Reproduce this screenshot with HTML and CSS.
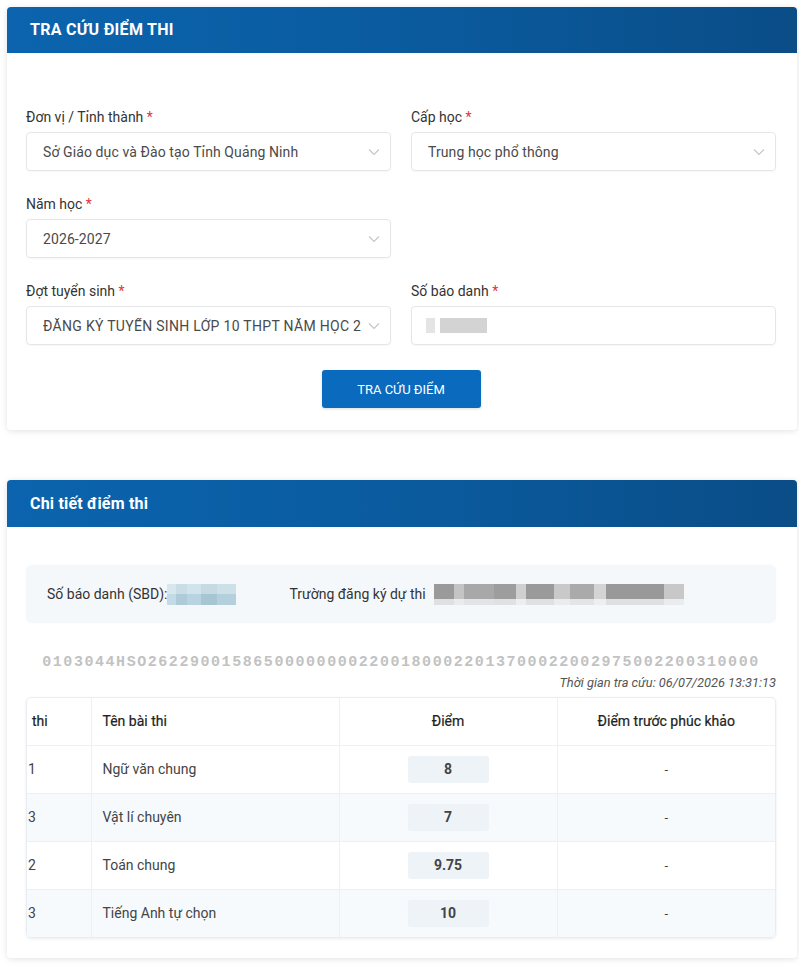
FILE: index.html
```html
<!DOCTYPE html>
<html>
<head>
	<title>Tra cứu điểm thi</title>
	<meta charset="utf-8">
	<link rel="stylesheet" href="styles.css">
</head>
<body>
<div class="page">
	<div class="card">
		<div class="card-head">TRA CỨU ĐIỂM THI</div>
		<div class="card-body search">
			<div class="form-grid">
				<div class="field">
					<label>Đơn vị / Tỉnh thành <i>*</i></label>
					<div class="select">
						<span>Sở Giáo dục và Đào tạo Tỉnh Quảng Ninh</span>
						<svg width="12" height="8" viewBox="0 0 12 8"><path d="M1 1.5l5 5 5-5" fill="none" stroke="#c6c6c6" stroke-width="1.2"/></svg>
					</div>
				</div>
				<div class="field">
					<label>Cấp học <i>*</i></label>
					<div class="select">
						<span>Trung học phổ thông</span>
						<svg width="12" height="8" viewBox="0 0 12 8"><path d="M1 1.5l5 5 5-5" fill="none" stroke="#c6c6c6" stroke-width="1.2"/></svg>
					</div>
				</div>
				<div class="field">
					<label>Năm học <i>*</i></label>
					<div class="select">
						<span>2026-2027</span>
						<svg width="12" height="8" viewBox="0 0 12 8"><path d="M1 1.5l5 5 5-5" fill="none" stroke="#c6c6c6" stroke-width="1.2"/></svg>
					</div>
				</div>
				<div class="field"></div>
				<div class="field">
					<label>Đợt tuyển sinh <i>*</i></label>
					<div class="select">
						<span class="long">ĐĂNG KÝ TUYỂN SINH LỚP 10 THPT NĂM HỌC 2</span>
						<svg width="12" height="8" viewBox="0 0 12 8"><path d="M1 1.5l5 5 5-5" fill="none" stroke="#c6c6c6" stroke-width="1.2"/></svg>
					</div>
				</div>
				<div class="field">
					<label>Số báo danh <i>*</i></label>
					<div class="input">
						<span class="blur blur-input"></span>
					</div>
				</div>
			</div>
			<div class="actions">
				<button class="btn">TRA CỨU ĐIỂM</button>
			</div>
		</div>
	</div>

	<div class="card result">
		<div class="card-head title">Chi tiết điểm thi</div>
		<div class="card-body">
			<div class="info">
				<div class="info-item">Số báo danh (SBD):<span class="blur blur-sbd"></span></div>
				<div class="info-item">Trường đăng ký dự thi <span class="blur blur-school"></span></div>
			</div>
			<div class="code">0103044HSO2622900158650000000022001800022013700022002975002200310000</div>
			<div class="time">Thời gian tra cứu: 06/07/2026 13:31:13</div>
			<div class="table-wrap">
				<table class="scores">
					<thead>
						<tr>
							<th class="c-id">thi</th>
							<th class="c-name">Tên bài thi</th>
							<th class="c-mid">Điểm</th>
							<th class="c-mid">Điểm trước phúc khảo</th>
						</tr>
					</thead>
					<tbody>
						<tr>
							<td class="c-id">1</td>
							<td class="c-name">Ngữ văn chung</td>
							<td class="c-mid"><span class="score">8</span></td>
							<td class="c-mid dash">-</td>
						</tr>
						<tr>
							<td class="c-id">3</td>
							<td class="c-name">Vật lí chuyên</td>
							<td class="c-mid"><span class="score">7</span></td>
							<td class="c-mid dash">-</td>
						</tr>
						<tr>
							<td class="c-id">2</td>
							<td class="c-name">Toán chung</td>
							<td class="c-mid"><span class="score">9.75</span></td>
							<td class="c-mid dash">-</td>
						</tr>
						<tr>
							<td class="c-id">3</td>
							<td class="c-name">Tiếng Anh tự chọn</td>
							<td class="c-mid"><span class="score">10</span></td>
							<td class="c-mid dash">-</td>
						</tr>
					</tbody>
				</table>
			</div>
		</div>
	</div>
</div>
</body>
</html>
```

FILE: styles.css
```css
*{
	box-sizing: border-box;
}
body{
	margin: 0;
	background-color: #fff;
	font-family: Roboto, "Liberation Sans", Arial, sans-serif;
	color: #333;
}
.page{
	padding: 7px 2px 10px 7px;
}
.card{
	background-color: #fff;
	border-radius: 4px;
	box-shadow: 0 1px 6px rgba(0,0,0,.12);
	overflow: hidden;
}
.card + .card{
	margin-top: 50px;
}
.card-head{
	height: 46px;
	line-height: 46px;
	padding-left: 23px;
	color: #fff;
	font-size: 16px;
	font-weight: bold;
	letter-spacing: .3px;
	background: linear-gradient(90deg, #0b64ae 0%, #0a5a9d 55%, #0a4d87 100%);
}
.card-head.title{
	height: 47px;
	line-height: 47px;
	font-size: 16px;
	letter-spacing: .2px;
}
.card-body{
	padding: 38px 21px 20px 19px;
}
.card-body.search{
	padding-top: 54px;
	padding-bottom: 22px;
}

/* form */
.form-grid{
	display: grid;
	grid-template-columns: minmax(0, 1fr) minmax(0, 1fr);
	column-gap: 20px;
	row-gap: 23px;
}
.field label{
	display: block;
	height: 20px;
	line-height: 20px;
	font-size: 14px;
	color: #333;
	margin-bottom: 5px;
}
.field label i{
	font-style: normal;
	color: #e0333d;
}
.select, .input{
	height: 39px;
	border: 1px solid #e4e6ea;
	border-radius: 4px;
	box-shadow: 0 1px 2px rgba(0,0,0,.04);
	display: flex;
	align-items: center;
	padding: 0 10px 0 16px;
	font-size: 14px;
	color: #4a4a4a;
}
.select span{
	flex: 1;
	min-width: 0;
	white-space: nowrap;
	overflow: hidden;
	letter-spacing: .1px;
}
.select span.long{
	letter-spacing: .3px;
}
.select svg{
	flex: none;
	margin-left: 6px;
}
.actions{
	display: flex;
	justify-content: center;
	margin-top: 25px;
}
.btn{
	width: 159px;
	height: 38px;
	border: 0;
	border-radius: 3px;
	background-color: #0a6abd;
	color: #fff;
	font-family: Roboto, "Liberation Sans", Arial, sans-serif;
	font-size: 13px;
	box-shadow: 0 1px 3px rgba(0,0,0,.15);
}

/* blurred data */
.blur{
	display: inline-block;
	vertical-align: middle;
}
.blur-input{
	width: 61px;
	height: 15px;
	background:
		linear-gradient(90deg, #e4e4e4 0 9px, transparent 9px 14px, #d3d3d3 14px 61px);
	margin-left: -2px;
}
.blur-sbd{
	width: 69px;
	height: 21px;
	background:
		linear-gradient(180deg, rgba(255,255,255,.35) 0 10px, transparent 10px),
		linear-gradient(90deg, #c3dbe6 0 9px, #aecbd9 9px 20px, #b9d4e1 20px 34px, #a6c6d4 34px 50px, #b3d0dc 50px 69px);
}
.blur-school{
	width: 250px;
	height: 21px;
	margin-left: 8px;
	background:
		linear-gradient(180deg, transparent 0 15px, rgba(245,248,251,.75) 15px),
		linear-gradient(90deg, #9a9a9a 0 20px, #c4c4c4 20px 30px, #a8a8a8 30px 60px, #9d9d9d 60px 82px, #d0d0d0 82px 92px, #9a9a9a 92px 120px, #c9c9c9 120px 136px, #aaa 136px 160px, #d4d4d4 160px 172px, #999 172px 230px, #c8c8c8 230px 250px);
}

/* result */
.info{
	height: 58px;
	border-radius: 6px;
	background-color: #f5f8fb;
	box-shadow: 0 0 2px rgba(0,0,0,.04);
	display: flex;
	align-items: center;
	padding-left: 21px;
	font-size: 14px;
	color: #333;
	gap: 53px;
}
.info-item{
	display: flex;
	align-items: center;
}
.code{
	margin-top: 30px;
	text-align: center;
	font-family: "Liberation Mono", "DejaVu Sans Mono", monospace;
	font-size: 15px;
	font-weight: bold;
	letter-spacing: 1.55px;
	color: #c2c2c2;
	line-height: 20px;
}
.time{
	text-align: right;
	font-size: 12.8px;
	font-style: italic;
	color: #555;
	line-height: 16px;
	margin-top: 2px;
}
.table-wrap{
	margin-top: 6px;
	border: 1px solid #e9edf1;
	border-radius: 5px;
	overflow: hidden;
	box-shadow: 0 1px 3px rgba(0,0,0,.08);
}
.scores{
	width: 100%;
	border-collapse: collapse;
	table-layout: fixed;
	font-size: 14px;
}
.scores th, .scores td{
	height: 48px;
	border-right: 1px solid #eef1f4;
	border-bottom: 1px solid #eef1f4;
	color: #444;
}
.scores th{
	height: 47px;
	font-weight: normal;
	color: #222;
	font-size: 14px;
	-webkit-text-stroke: .2px #222;
}
.scores th:last-child, .scores td:last-child{
	border-right: 0;
}
.scores tbody tr:last-child td{
	border-bottom: 0;
}
.scores tbody tr:nth-child(even){
	background-color: #f6fafd;
}
.c-id{
	width: 64px;
	text-align: left;
	padding-left: 1px;
}
th.c-id{
	padding-left: 5px;
}
.c-name{
	width: 248px;
	text-align: left;
	padding-left: 11px;
}
.c-mid{
	text-align: center;
}
.score{
	display: inline-block;
	width: 81px;
	height: 27px;
	line-height: 27px;
	border-radius: 3px;
	background-color: #eef3f8;
	font-weight: bold;
	color: #444;
	font-size: 14px;
}
.dash{
	color: #999;
	font-size: 13px;
}
```
